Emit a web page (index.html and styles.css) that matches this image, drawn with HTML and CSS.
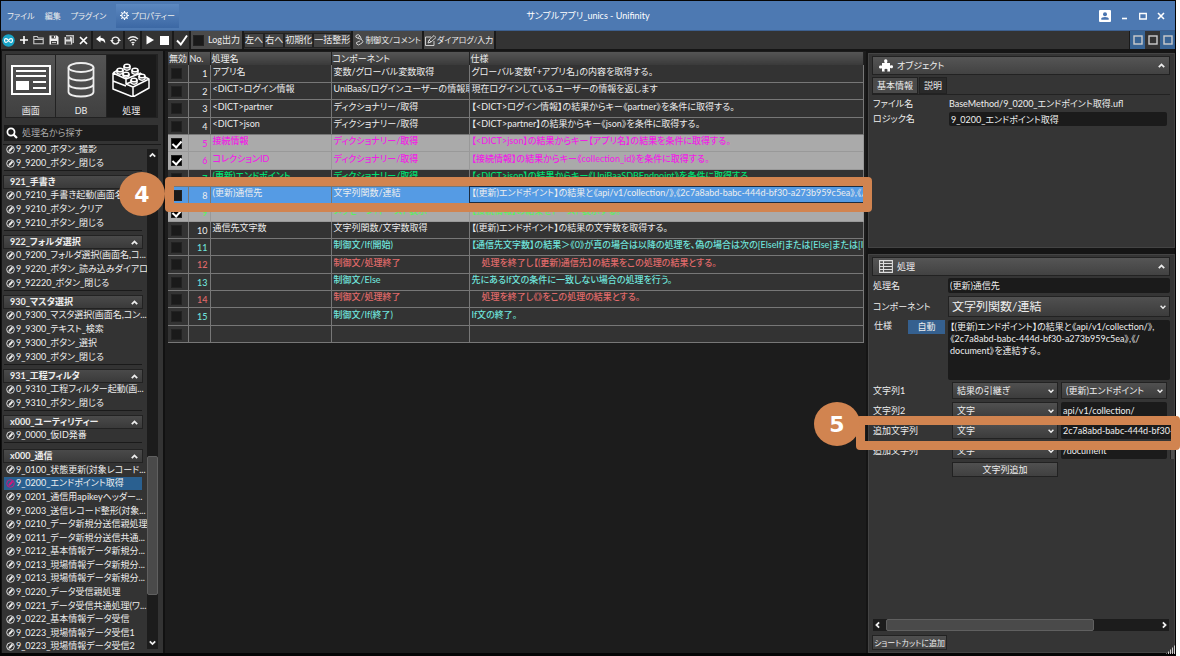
FILE: index.html
```
<!DOCTYPE html>
<html lang="ja">

<head>
    <meta charset="UTF-8">
    <title>サンプルアプリ_unics - Unifinity</title>
    <link rel="stylesheet" href="styles.css">
</head>

<body>

    <!-- アイコン定義 -->
    <svg class="defs" aria-hidden="true">
        <symbol id="pen" viewBox="0 0 18 18">
            <circle cx="9" cy="9" r="7.6" fill="none" stroke="currentColor" stroke-width="1.8" />
            <path d="M5 14l.5-4L11.500 3.500l3 2.500L9 12.500z" fill="currentColor" />
        </symbol>
        <symbol id="up" viewBox="0 0 10 10">
            <path d="M2 6.800L5 3.800l3 3" fill="none" stroke="currentColor" stroke-width="2" />
        </symbol>
        <symbol id="pane" viewBox="0 0 10 10">
            <rect x="1" y="1" width="8" height="8" fill="none" stroke="currentColor" stroke-width="1.4" />
        </symbol>
    </svg>

    <div class="window">

        <header class="titlebar">
            <nav class="menu">
                <button>ファイル</button>
                <button>編集</button>
                <button>プラグイン</button>
                <button class="active">
                    <svg width="9" height="9" viewBox="0 0 20 20"><circle cx="10" cy="10" r="6" fill="none" stroke="#fff" stroke-width="2.4" /><circle cx="10" cy="10" r="1.8" fill="#fff" /><path d="M10 0v4M10 16v4M0 10h4M16 10h4M3 3l3 3M14 14l3 3M17 3l-3 3M6 14l-3 3" stroke="#fff" stroke-width="2.6" /></svg>
                    プロパティー
                </button>
            </nav>
            <h1>サンプルアプリ_unics - Unifinity</h1>
            <div class="window-buttons">
                <button aria-label="ユーザー"><svg width="12" height="12" viewBox="0 0 12 12"><rect width="12" height="12" rx="1" fill="#fff" /><circle cx="6" cy="4.2" r="2" fill="#4a75b0" /><path d="M2.3 9.8V8.6Q2.3 7 6 7t3.7 1.6v1.2z" fill="#4a75b0" /></svg></button>
                <button aria-label="最小化"><svg width="8" height="8" viewBox="0 0 8 8"><path d="M1 6.5h5" stroke="#fff" stroke-width="1.6" /></svg></button>
                <button aria-label="最大化"><svg width="8" height="8" viewBox="0 0 8 8"><path d="M.7 1.5h6.6v5.5H.7z" fill="none" stroke="#fff" stroke-width="1.3" /></svg></button>
                <button aria-label="閉じる"><svg width="8" height="8" viewBox="0 0 8 8"><path d="M1 1l6 6M7 1L1 7" stroke="#fff" stroke-width="1.6" /></svg></button>
            </div>
        </header>

        <div class="toolbar">
            <div class="group">
                <button aria-label="Unifinity"><svg width="13" height="13" viewBox="0 0 26 26"><circle cx="13" cy="13" r="12.5" fill="#18a5c8" /><path d="M13 13C10 8 5 8 5 13s5 5 8 0 8-5 8 0-5 5-8 0z" fill="none" stroke="#fff" stroke-width="2.4" /></svg></button>
                <button aria-label="新規"><svg width="10" height="10" viewBox="0 0 10 10"><path d="M5 1v8M1 5h8" stroke="#fff" stroke-width="1.6" /></svg></button>
                <button aria-label="開く"><svg width="11" height="10" viewBox="0 0 11 10"><path d="M.8 8.7V1.5h3.4l1 1.5h5v5.7zM1 4.5h9" fill="none" stroke="#ccc" stroke-width="1.1" /></svg></button>
                <button aria-label="保存"><svg width="10" height="10" viewBox="0 0 10 10"><path d="M.5.5H8L9.5 2v7.5h-9z" fill="#eee" /><path d="M2.5.5h4.2v3H2.5zM2 6h6v3.5H2z" fill="#444" /><path d="M5 1h1v2H5zM3 7h4v.8H3z" fill="#eee" /></svg></button>
                <button aria-label="すべて保存"><svg width="10" height="10" viewBox="0 0 10 10"><path d="M2 0h8v8H8.500V1.500H2z" fill="#bbb" /><path d="M.5 2H7l1.200 1v6.500H.5z" fill="#ddd" /><path d="M2 2h4v2.500H2zM2 6.500h5v3H2z" fill="#555" /></svg></button>
                <button aria-label="削除"><svg width="9" height="9" viewBox="0 0 9 9"><path d="M1 1l7 7M8 1L1 8" stroke="#fff" stroke-width="1.7" /></svg></button>
            </div>
            <div class="group">
                <button aria-label="元に戻す"><svg width="10" height="10" viewBox="0 0 10 10"><path d="M0 4l4.500-3.500v2.200C8 2.800 9.500 5 9.200 8.500 8.300 6.300 7 5.400 4.500 5.400v2.200z" fill="#fff" /></svg></button>
                <button aria-label="更新"><svg width="11" height="11" viewBox="0 0 22 22"><path d="M4 9.500a7.300 7.300 0 0 1 14 0M18 12.500a7.300 7.300 0 0 1-14 0" fill="none" stroke="#eee" stroke-width="2.600" /><path d="M0 10h7.500l-3.700 4.500zM14.500 12H22l-3.700-4.500z" fill="#eee" /></svg></button>
            </div>
            <div class="group">
                <button aria-label="通信"><svg width="12" height="11" viewBox="0 0 24 22"><path d="M2 8q10-9 20 0M5.500 12q6.500-6 13 0M9 16q3-2.500 6 0" fill="none" stroke="#eee" stroke-width="2.600" /><circle cx="12" cy="19" r="2" fill="#eee" /></svg></button>
            </div>
            <div class="group">
                <button aria-label="実行"><svg width="10" height="10" viewBox="0 0 10 10"><path d="M1.500.5L9 5 1.500 9.500z" fill="#fff" /></svg></button>
                <button aria-label="停止"><svg width="9" height="9" viewBox="0 0 9 9"><path d="M0 0h9v9H0z" fill="#fff" /></svg></button>
            </div>
            <div class="group">
                <button aria-label="検証"><svg width="12" height="12" viewBox="0 0 12 12"><path d="M1 6.500L4.800 10.500 11 1.500" fill="none" stroke="#fff" stroke-width="1.900" /></svg></button>
            </div>
            <label class="log"><input type="checkbox">Log出力</label>
            <div class="group text">
                <button>左へ</button>
                <button>右へ</button>
                <button>初期化</button>
                <button>一括整形</button>
            </div>
            <button class="wide"><svg width="10" height="12" viewBox="0 0 20 24"><path d="M4 3q5-4 8 1l-5 4q-5-1-3-5zM7 8l8 3q5 4 1 7l-7 4q-5-1-4-5l7-3M12 4l3 7" fill="none" stroke="#ddd" stroke-width="1.800" /></svg>制御文/コメント</button>
            <button class="wide"><svg width="11" height="11" viewBox="0 0 22 22"><path d="M12 4H1v17h17v-9" fill="none" stroke="#ddd" stroke-width="1.800" /><path d="M6 16l2-6L18 1l4 4-10 9zM8 10l4 4" fill="none" stroke="#ddd" stroke-width="1.800" /></svg>ダイアログ/入力</button>
            <div class="panes">
                <button class="on" aria-label="左パネル"><svg width="10" height="10"><use href="#pane" /></svg></button>
                <button aria-label="下パネル"><svg width="10" height="10"><use href="#pane" /></svg></button>
                <button class="on" aria-label="右パネル"><svg width="10" height="10"><use href="#pane" /></svg></button>
            </div>
        </div>

        <main class="workspace">

            <aside class="sidebar">
                <div class="modes">
                    <button>
                        <svg width="40" height="30" viewBox="0 0 40 30"><path d="M1 1h38v28H1z" fill="none" stroke="#fff" stroke-width="2" /><path d="M5 6h30M5 11h30M22 17h13M22 23h13" stroke="#fff" stroke-width="1.800" /><path d="M5 16h13v9H5z" fill="#fff" /></svg>
                        画面
                    </button>
                    <button>
                        <svg width="28" height="36" viewBox="0 0 28 36"><g fill="none" stroke="#eee" stroke-width="1.800"><ellipse cx="14" cy="5.500" rx="12.500" ry="4.500" /><path d="M1.500 5.500v24.500c0 6 25 6 25 0V5.500M1.500 14c0 6 25 6 25 0M1.500 22c0 6 25 6 25 0" /></g></svg>
                        DB
                    </button>
                    <button class="selected">
                        <svg width="38" height="34" viewBox="0 0 38 34"><g fill="none" stroke="#fff" stroke-width="1.500" stroke-linejoin="round"><path d="M1 10l13 6 15-6M1 10v16l20 8 16-9V16l-16 8-7-3v-5M1 18l13 5M21 24v9M1 10L6 7M29 10v2M37 16l-4-2M14 21l5-2" /><path d="M5 7v3q3 2.500 6 0V7M12 3v3q3 2.500 6 0V3M11 11v2q3 2.500 6 0v-2M20 7v3q3 2.500 6 0V7M19 17v3q3 2.500 6 0v-3M27 13v3q3 2.500 6 0v-3" /><ellipse cx="8" cy="7" rx="3" ry="1.800" /><ellipse cx="15" cy="3" rx="3" ry="1.800" /><ellipse cx="14" cy="11" rx="3" ry="1.800" /><ellipse cx="23" cy="7" rx="3" ry="1.800" /><ellipse cx="22" cy="17" rx="3" ry="1.800" /><ellipse cx="30" cy="13" rx="3" ry="1.800" /></g></svg>
                        処理
                    </button>
                </div>

                <label class="search">
                    <svg width="12" height="12" viewBox="0 0 12 12"><circle cx="5" cy="5" r="3.600" fill="none" stroke="#fff" stroke-width="1.700" /><path d="M7.500 7.500L11 11" stroke="#fff" stroke-width="2.200" /></svg>
                    <input type="text" placeholder="処理名から探す" aria-label="処理名から探す">
                </label>

                <div class="list-area">
                    <div class="list">
                        <section class="cut">
                            <ul>
                                <li><svg><use href="#pen" /></svg>9_9200_ボタン_撮影</li>
                                <li><svg><use href="#pen" /></svg>9_9200_ボタン_閉じる</li>
                            </ul>
                        </section>
                        <section>
                            <button class="head">921_手書き<svg><use href="#up" /></svg></button>
                            <ul>
                                <li><svg><use href="#pen" /></svg>0_9210_手書き起動(画面名...</li>
                                <li><svg><use href="#pen" /></svg>9_9210_ボタン_クリア</li>
                                <li><svg><use href="#pen" /></svg>9_9210_ボタン_閉じる</li>
                            </ul>
                        </section>
                        <section>
                            <button class="head">922_フォルダ選択<svg><use href="#up" /></svg></button>
                            <ul>
                                <li><svg><use href="#pen" /></svg>0_9200_フォルダ選択(画面名,コ...</li>
                                <li><svg><use href="#pen" /></svg>9_9220_ボタン_読み込みダイアロ...</li>
                                <li><svg><use href="#pen" /></svg>9_92220_ボタン_閉じる</li>
                            </ul>
                        </section>
                        <section>
                            <button class="head">930_マスタ選択<svg><use href="#up" /></svg></button>
                            <ul>
                                <li><svg><use href="#pen" /></svg>0_9300_マスタ選択(画面名,コン...</li>
                                <li><svg><use href="#pen" /></svg>9_9300_テキスト_検索</li>
                                <li><svg><use href="#pen" /></svg>9_9300_ボタン_選択</li>
                                <li><svg><use href="#pen" /></svg>9_9300_ボタン_閉じる</li>
                            </ul>
                        </section>
                        <section>
                            <button class="head">931_工程フィルタ<svg><use href="#up" /></svg></button>
                            <ul>
                                <li><svg><use href="#pen" /></svg>0_9310_工程フィルター起動(画...</li>
                                <li><svg><use href="#pen" /></svg>9_9310_ボタン_閉じる</li>
                            </ul>
                        </section>
                        <section>
                            <button class="head">x000_ユーティリティー<svg><use href="#up" /></svg></button>
                            <ul>
                                <li><svg><use href="#pen" /></svg>9_0000_仮ID発番</li>
                            </ul>
                        </section>
                        <section class="last">
                            <button class="head">x000_通信<svg><use href="#up" /></svg></button>
                            <ul>
                                <li><svg><use href="#pen" /></svg>9_0100_状態更新(対象レコード...</li>
                                <li class="current"><svg><use href="#pen" /></svg>9_0200_エンドポイント取得</li>
                                <li><svg><use href="#pen" /></svg>9_0201_通信用apikeyヘッダー...</li>
                                <li><svg><use href="#pen" /></svg>9_0203_送信レコード整形(対象...</li>
                                <li><svg><use href="#pen" /></svg>9_0210_データ新規分送信親処理</li>
                                <li><svg><use href="#pen" /></svg>9_0211_データ新規分送信共通...</li>
                                <li><svg><use href="#pen" /></svg>9_0212_基本情報データ新規分...</li>
                                <li><svg><use href="#pen" /></svg>9_0213_現場情報データ新規分...</li>
                                <li><svg><use href="#pen" /></svg>9_0213_現場情報データ新規分...</li>
                                <li><svg><use href="#pen" /></svg>9_0220_データ受信親処理</li>
                                <li><svg><use href="#pen" /></svg>9_0221_データ受信共通処理(ワ...</li>
                                <li><svg><use href="#pen" /></svg>9_0222_基本情報データ受信</li>
                                <li><svg><use href="#pen" /></svg>9_0223_現場情報データ受信1</li>
                                <li><svg><use href="#pen" /></svg>9_0223_現場情報データ受信2</li>
                            </ul>
                        </section>
                    </div>
                    <div class="vscroll">
                        <svg><use href="#up" /></svg>
                        <div class="track">
                            <div class="thumb"></div>
                        </div>
                        <svg class="down"><use href="#up" /></svg>
                    </div>
                </div>
            </aside>

            <section class="steps">
                <table>
                    <colgroup>
                        <col class="c-off">
                        <col class="c-no">
                        <col class="c-name">
                        <col class="c-comp">
                        <col>
                    </colgroup>
                    <thead>
                        <tr><th>無効</th><th>No.</th><th>処理名</th><th>コンポーネント</th><th>仕様</th></tr>
                    </thead>
                    <tbody>
                        <tr><td><input type="checkbox" aria-label="無効 1"></td><td>1</td><td>アプリ名</td><td>変数/グローバル変数取得</td><td>グローバル変数「+アプリ名」の内容を取得する。</td></tr>
                        <tr><td><input type="checkbox" aria-label="無効 2"></td><td>2</td><td>&lt;DICT&gt;ログイン情報</td><td>UniBaaS/ログインユーザーの情報取得</td><td>現在ログインしているユーザーの情報を返します</td></tr>
                        <tr><td><input type="checkbox" aria-label="無効 3"></td><td>3</td><td>&lt;DICT&gt;partner</td><td>ディクショナリー/取得</td><td>【&lt;DICT&gt;ログイン情報】の結果からキー《partner》を条件に取得する。</td></tr>
                        <tr><td><input type="checkbox" aria-label="無効 4"></td><td>4</td><td>&lt;DICT&gt;json</td><td>ディクショナリー/取得</td><td>【&lt;DICT&gt;partner】の結果からキー《json》を条件に取得する。</td></tr>
                        <tr class="off magenta"><td><input type="checkbox" aria-label="無効 5" checked></td><td>5</td><td>接続情報</td><td>ディクショナリー/取得</td><td>【&lt;DICT&gt;json】の結果からキー【アプリ名】の結果を条件に取得する。</td></tr>
                        <tr class="off magenta"><td><input type="checkbox" aria-label="無効 6" checked></td><td>6</td><td>コレクションID</td><td>ディクショナリー/取得</td><td>【接続情報】の結果からキー《collection_id》を条件に取得する。</td></tr>
                        <tr class="green"><td><input type="checkbox" aria-label="無効 7"></td><td>7</td><td>(更新)エンドポイント</td><td>ディクショナリー/取得</td><td>【&lt;DICT&gt;json】の結果からキー《UniBaaSDBEndpoint》を条件に取得する。</td></tr>
                        <tr class="selected"><td><input type="checkbox" aria-label="無効 8"></td><td>8</td><td>(更新)通信先</td><td>文字列関数/連結</td><td>【(更新)エンドポイント】の結果と《api/v1/collection/》,《2c7a8abd-babc-444d-bf30-a273b959c5ea》,《/do</td></tr>
                        <tr class="off lime"><td><input type="checkbox" aria-label="無効 9" checked></td><td>9</td><td></td><td>メッセージ/トースト表示</td><td>【接続情報】の結果をトースト表示する。</td></tr>
                        <tr><td><input type="checkbox" aria-label="無効 10"></td><td>10</td><td>通信先文字数</td><td>文字列関数/文字数取得</td><td>【(更新)エンドポイント】の結果の文字数を取得する。</td></tr>
                        <tr class="cyan"><td><input type="checkbox" aria-label="無効 11"></td><td>11</td><td></td><td>制御文/If(開始)</td><td>【通信先文字数】の結果＞《0》が真の場合は以降の処理を、偽の場合は次の[ElseIf]または[Else]または[If(終了</td></tr>
                        <tr class="red"><td><input type="checkbox" aria-label="無効 12"></td><td>12</td><td></td><td>制御文/処理終了</td><td class="nested">処理を終了し【(更新)通信先】の結果をこの処理の結果とする。</td></tr>
                        <tr class="cyan"><td><input type="checkbox" aria-label="無効 13"></td><td>13</td><td></td><td>制御文/Else</td><td>先にあるIf文の条件に一致しない場合の処理を行う。</td></tr>
                        <tr class="red"><td><input type="checkbox" aria-label="無効 14"></td><td>14</td><td></td><td>制御文/処理終了</td><td class="nested">処理を終了し《》をこの処理の結果とする。</td></tr>
                        <tr class="cyan"><td><input type="checkbox" aria-label="無効 15"></td><td>15</td><td></td><td>制御文/If(終了)</td><td>If文の終了。</td></tr>
                        <tr><td><input type="checkbox" aria-label="無効"></td><td></td><td></td><td></td><td></td></tr>
                    </tbody>
                </table>
            </section>

            <aside class="props">

                <section class="panel object">
                    <button class="panel-head">
                        <svg width="14" height="13" viewBox="0 0 14 13"><path d="M3 4h2.700C4.500 1.500 5.200.3 6.700.3S9 1.500 8 4h3v2.800c2-1 3-.4 3 1s-1 2-3 1V12.500H8.200c.8-2 .1-2.700-1.200-2.700s-2 .7-1.200 2.700H3V9.200c-2 .8-3 .1-3-1.200s1-2 3-1.200z" fill="#fff" /></svg>
                        オブジェクト
                        <svg class="fold"><use href="#up" /></svg>
                    </button>
                    <div class="tabs">
                        <button class="selected">基本情報</button>
                        <button>説明</button>
                    </div>
                    <div class="fields">
                        <span>ファイル名</span>
                        <span class="value">BaseMethod/9_0200_エンドポイント取得.ufl</span>
                        <label for="logic">ロジック名</label>
                        <input id="logic" type="text" value="9_0200_エンドポイント取得">
                    </div>
                </section>

                <section class="panel process">
                    <button class="panel-head">
                        <svg width="14" height="13" viewBox="0 0 14 13"><path d="M.6.6h12.800v11.800H.6zM.6 3.500h12.800M.6 6.500h12.800M.6 9.500h12.800M4.500.6v11.800" fill="none" stroke="#ddd" stroke-width="1.100" /></svg>
                        処理
                        <svg class="fold"><use href="#up" /></svg>
                    </button>
                    <div class="form">
                        <label for="name">処理名</label>
                        <input id="name" type="text" value="(更新)通信先">
                        <label for="component">コンポーネント</label>
                        <select id="component" class="large"><option>文字列関数/連結</option></select>
                        <div class="spec">
                            <label for="spec">仕様</label>
                            <button class="auto">自動</button>
                        </div>
                        <textarea id="spec" rows="5">【(更新)エンドポイント】の結果と《api/v1/collection/》,
《2c7a8abd-babc-444d-bf30-a273b959c5ea》,《/
document》を連結する。</textarea>
                    </div>
                    <div class="params">
                        <label for="p1">文字列1</label>
                        <select id="p1"><option>結果の引継ぎ</option></select>
                        <select aria-label="文字列1の値"><option>(更新)エンドポイント</option></select>
                        <label for="p2">文字列2</label>
                        <select id="p2"><option>文字</option></select>
                        <input type="text" aria-label="文字列2の値" value="api/v1/collection/">
                        <label for="p3">追加文字列</label>
                        <select id="p3"><option>文字</option></select>
                        <input type="text" aria-label="追加文字列の値" class="long" value="2c7a8abd-babc-444d-bf30-">
                        <label for="p4">追加文字列</label>
                        <select id="p4"><option>文字</option></select>
                        <input type="text" aria-label="追加文字列2の値" value="/document">
                        <button class="more" aria-label="削除"></button>
                        <button class="add">文字列追加</button>
                    </div>
                    <div class="hscroll">
                        <svg class="left"><use href="#up" /></svg>
                        <div class="track">
                            <div class="thumb"></div>
                        </div>
                        <svg class="right"><use href="#up" /></svg>
                    </div>
                    <button class="shortcut">ショートカットに追加</button>
                </section>

            </aside>

        </main>

        <div class="grip"></div>
    </div>

    <!-- 手順の注釈 -->
    <div class="frame frame4"></div>
    <div class="badge badge4">4</div>
    <div class="frame frame5"></div>
    <div class="badge badge5">5</div>

</body>

</html>
```
FILE: styles.css
```
* {
    padding: 0;
    margin: 0;
    box-sizing: border-box;
}

body {
    position: relative;
    height: 100vh;
    padding-right: 4px;
    overflow: hidden;
    background: #fff;
    color: #eee;
    font: 9px/12px Lato, "Noto Sans CJK JP", sans-serif;
    font-feature-settings: "palt";
}

button,
input,
select,
textarea {
    font: inherit;
    font-feature-settings: inherit;
    color: inherit;
    background: none;
    border: none;
    outline: none;
    border-radius: 0;
}

button,
label,
li,
th,
td {
    white-space: nowrap;
}

svg {
    flex: none;
}

.defs {
    position: absolute;
    width: 0;
    height: 0;
}

.window {
    position: relative;
    display: flex;
    flex-direction: column;
    height: 100%;
    padding: 1px 1px 3px;
    background: #050505;
}

/* title bar */

.titlebar {
    display: grid;
    grid-template-columns: 1fr auto 1fr;
    align-items: center;
    height: 30px;
    padding: 0 6px;
    background: #4d79b2;
    border-bottom: 1px solid #3d608f;
}

.titlebar h1 {
    font-size: 9px;
    font-weight: normal;
    color: #fff;
}

.menu {
    display: flex;
    align-items: center;
    gap: 10px;
    font-size: 8px;
}

.menu button.active {
    display: flex;
    align-items: center;
    gap: 2px;
    height: 24px;
    padding: 0 4px;
    background: linear-gradient(#5c88c0, #3c68a4);
}

.window-buttons {
    display: flex;
    justify-content: flex-end;
    align-items: center;
    gap: 10px;
    padding-right: 4px;
}

.window-buttons svg {
    display: block;
}

/* toolbar */

.toolbar {
    display: flex;
    align-items: stretch;
    height: 20px;
    background: #333;
    border-bottom: 2px solid #151515;
}

.group {
    display: flex;
    border-right: 2px solid #1a1a1a;
}

.group button {
    width: 15px;
    display: flex;
    align-items: center;
    justify-content: center;
}

.group.text {
    align-items: center;
}

.group.text button {
    width: auto;
    height: 15px;
    background: #444;
    border: 1px solid #222;
}

.log {
    display: flex;
    align-items: center;
    gap: 4px;
    padding: 0 2px;
    background: #4a4a4a;
    border-right: 2px solid #1a1a1a;
}

input[type="checkbox"] {
    appearance: none;
    display: block;
    width: 11px;
    height: 11px;
    background: #1a1a1a;
    border: 1px solid #222;
}

input[type="checkbox"]:checked {
    background: #000;
}

input[type="checkbox"]:checked::before {
    content: "";
    display: block;
    width: 4px;
    height: 7px;
    margin: 0 auto;
    border: solid #fff;
    border-width: 0 2px 2px 0;
    transform: rotate(42deg);
}

.wide {
    display: flex;
    align-items: center;
    gap: 1px;
    padding: 0 1px;
    background: #484848;
    border-right: 2px solid #1a1a1a;
    font-size: 8px;
}

.panes {
    display: flex;
    margin-left: auto;
    border-left: 1px solid #1a1a1a;
}

.panes button {
    width: 15px;
    display: flex;
    align-items: center;
    justify-content: center;
    color: #ccc;
}

.panes .on {
    background: #386494;
}

/* body */

.workspace {
    flex: 1;
    display: flex;
    min-height: 0;
    background: #1c1c1c;
}

.sidebar {
    flex: 0 0 164px;
    display: flex;
    flex-direction: column;
    padding: 3px 2px 0 1px;
    background: #333;
    border: solid #111;
    border-width: 0 2px 0 1px;
}

.modes {
    display: flex;
    margin: 0 2px;
    width: 153px;
    border: 1px solid #222;
}

.modes button {
    flex: 1;
    display: flex;
    flex-direction: column;
    align-items: center;
    justify-content: space-between;
    height: 62px;
    background: linear-gradient(#555, #404040);
    border-right: 1px solid #222;
}

.modes button svg {
    margin: auto;
}

.modes .selected {
    background: #1a1a1a;
}

.search {
    display: flex;
    align-items: center;
    gap: 2px;
    height: 16px;
    width: 154px;
    margin: 7px 1px 3px;
    padding: 0 2px;
    background: #1c1c1c;
}

.search input {
    flex: 1;
    min-width: 0;
}

.search input::placeholder {
    color: #aaa;
}

.list-area {
    flex: 1;
    display: flex;
    min-height: 0;
    border-top: 1px solid #1a1a1a;
}

.list {
    flex: 1;
    display: flex;
    flex-direction: column;
    min-width: 0;
    padding-left: 1px;
    overflow: hidden;
}

.list section {
    flex: none;
    width: 138px;
    margin-bottom: 5px;
    border-bottom: 1px solid #1a1a1a;
}

.list .cut {
    margin-top: -3px;
}

.list .last {
    flex: 0 1 auto;
    min-height: 0;
    display: flex;
    flex-direction: column;
    margin: 2px 0 0;
    border: none;
}

.list .last ul {
    display: flex;
    flex-direction: column;
    min-height: 0;
    padding-top: 1px;
}

.list .last li {
    flex: 0 1 14px;
    min-height: 0;
}

.head {
    display: flex;
    flex: none;
    align-items: center;
    justify-content: space-between;
    width: 100%;
    height: 12px;
    padding: 0 3px 0 6px;
    background: linear-gradient(#4a4a4a, #3a3a3a);
    outline: 1px solid #222;
    font-weight: bold;
}

.head svg,
.fold {
    width: 9px;
    height: 9px;
}

.list ul {
    list-style: none;
}

.list li {
    display: flex;
    align-items: center;
    gap: 1px;
    height: 14px;
    padding-left: 2px;
}

.list li svg {
    width: 9px;
    height: 9px;
}

.list .current {
    background: #2a6090;
}

.list .current svg {
    color: #d6147c;
}

.vscroll {
    flex: 0 0 11px;
    display: flex;
    flex-direction: column;
    align-items: center;
    margin: 4px 3px 4px 0;
    background: #1c1c1c;
}

.vscroll svg,
.hscroll svg {
    width: 9px;
    height: 12px;
}

.down {
    transform: rotate(180deg);
}

.track {
    flex: 1;
    display: flex;
}

.vscroll .track {
    flex-direction: column;
    justify-content: flex-end;
    width: 100%;
    padding-bottom: 42px;
}

.vscroll .thumb {
    height: 32%;
    background: #4a4a4a;
    border: 1px solid #606060;
    border-radius: 2px;
}

/* table */

.steps {
    flex: 1;
    min-width: 0;
    padding: 1px 2px 0 3px;
}

table {
    width: 100%;
    table-layout: fixed;
    border-collapse: collapse;
}

.c-off {
    width: 20px;
}

.c-no {
    width: 22px;
}

.c-name {
    width: 121px;
}

.c-comp {
    width: 138px;
}

th {
    height: 13px;
    padding: 0 1px;
    background: linear-gradient(#555, #3a3a3a);
    border-right: 1px solid #222;
    font-weight: normal;
    text-align: left;
    line-height: 12px;
}

tbody tr {
    height: 17px;
    background: #333;
}

tbody tr:nth-child(3n) {
    height: 18px;
}

td {
    padding: 0 0 3px 2px;
    border: solid #777;
    border-width: 0 1px 1px 0;
    overflow: hidden;
    line-height: 12px;
}

td:first-child {
    padding: 1px 0 0 3px;
}

td:nth-child(2) {
    padding: 2px 2px 0 0;
    text-align: right;
}

td.nested {
    padding-left: 12px;
}

.off {
    background: #aaa;
}

.off td {
    border-color: #999;
}

.magenta,
.green,
.lime,
.cyan,
.red {
    font-weight: 500;
}

.magenta {
    color: #f01ee6;
}

.green {
    color: #00e070;
}

.lime {
    color: #5cf05c;
}

.cyan {
    color: #6fe3dc;
}

.red {
    color: #e06a6a;
}

tbody .selected {
    background: #559be4;
}

.selected td:last-child {
    outline: 1px solid #1c2c40;
    outline-offset: -1px;
}

/* properties */

.props {
    flex: 0 0 309px;
    display: flex;
    flex-direction: column;
    gap: 6px;
    min-width: 0;
    padding: 2px 0 0 2px;
    background: #151515;
}

.panel {
    display: flex;
    flex-direction: column;
    padding: 2px 4px 2px 3px;
    background: #353535;
    border: 1px solid #444;
}

.object {
    flex: 0 0 195px;
}

.process {
    flex: 1;
    min-height: 0;
    overflow: hidden;
}

.panel-head {
    display: flex;
    align-items: center;
    gap: 4px;
    flex: none;
    height: 19px;
    padding: 0 3px 0 6px;
    background: linear-gradient(#555, #424242);
    border: 1px solid #222;
}

.fold {
    margin-left: auto;
}

.tabs {
    display: flex;
    gap: 1px;
    margin-top: 2px;
    border-bottom: 1px solid #222;
}

.tabs button {
    height: 17px;
    padding: 0 4px;
    background: #2a2a2a;
    border: 1px solid #222;
}

.tabs .selected {
    background: #4a4a4a;
}

.fields {
    display: grid;
    grid-template-columns: 76px 1fr;
    align-items: center;
    row-gap: 2px;
    padding: 3px 3px 0 1px;
}

.fields input {
    height: 14px;
}

input[type="text"],
textarea {
    width: 100%;
    min-width: 0;
    padding: 0 2px;
    background: #1b1b1b;
    border-radius: 2px;
}

.search input[type="text"] {
    background: none;
}

select {
    appearance: none;
    min-width: 0;
    padding: 0 4px;
    background: url("data:image/svg+xml,%3Csvg xmlns='http://www.w3.org/2000/svg' viewBox='0 0 10 10'%3E%3Cpath d='M2 3.500l3 3 3-3' fill='none' stroke='%23eee' stroke-width='1.800'/%3E%3C/svg%3E") no-repeat right 2px center / 8px 8px, linear-gradient(#505050, #3c3c3c);
    border: 1px solid #222;
}

.form {
    display: grid;
    grid-template-columns: 75px 1fr;
    align-items: center;
    row-gap: 3px;
    margin: 2px 0 2px 1px;
}

.form input {
    height: 15px;
}

select.large {
    height: 21px;
    font-size: 12px;
    padding: 0 3px;
}

.spec {
    align-self: start;
    display: flex;
    justify-content: space-between;
    padding: 0 3px 0 1px;
}

.auto {
    width: 37px;
    height: 14px;
    background: #35608f;
}

textarea {
    display: block;
    height: 60px;
    padding-top: 1px;
    resize: none;
    overflow: hidden;
    white-space: pre;
}

.params {
    display: grid;
    grid-template-columns: 76px 106px 106px 4px;
    align-items: center;
    gap: 3px;
    margin-left: 1px;
}

.params label {
    grid-column: 1;
}

.params select,
.params input {
    height: 17px;
}

.params .long {
    grid-column: 3 / 5;
}

.params .more {
    height: 17px;
    background: #505050;
    border-left: 1px solid #222;
}

.params .add {
    grid-column: 2;
    height: 15px;
}

.add,
.shortcut {
    background: linear-gradient(#505050, #404040);
    border: 1px solid #222;
}

.hscroll {
    display: flex;
    align-items: center;
    height: 12px;
    margin: auto 1px 4px;
    background: #1c1c1c;
}

.hscroll .left {
    transform: rotate(-90deg);
}

.hscroll .right {
    transform: rotate(90deg);
}

.hscroll .track {
    margin: 0 4px;
}

.hscroll .thumb {
    width: 77%;
    height: 12px;
    background: #4a4a4a;
    border: 1px solid #606060;
    border-radius: 2px;
}

.shortcut {
    align-self: flex-start;
    height: 15px;
    padding: 0 1px;
    font-size: 8px;
}

.grip {
    position: absolute;
    right: 1px;
    bottom: 2px;
    width: 9px;
    height: 9px;
    background: repeating-linear-gradient(90deg, #ccc 0 1px, transparent 1px 2px);
    clip-path: polygon(100% 0, 100% 100%, 0 100%);
}

/* annotations lying over the window */

.frame {
    position: absolute;
    border: 9px solid #d18450;
    border-radius: 4px;
}

.frame4 {
    top: 177px;
    left: 165px;
    right: 308px;
    height: 35px;
}

.frame5 {
    top: 416px;
    right: 0;
    width: 324px;
    height: 34px;
}

.badge {
    position: absolute;
    display: flex;
    align-items: center;
    justify-content: center;
    width: 46px;
    height: 44px;
    border-radius: 50%;
    background: #d18450;
    color: #fff;
    font: bold 22px "DejaVu Sans", sans-serif;
}

.badge4 {
    top: 172px;
    left: 119px;
}

.badge5 {
    top: 402px;
    right: 320px;
}
```
